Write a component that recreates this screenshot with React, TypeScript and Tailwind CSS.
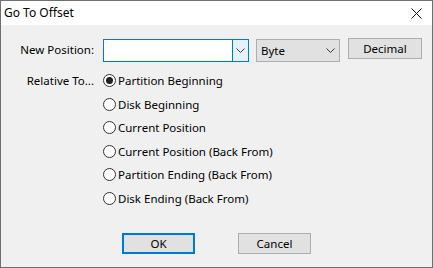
import React from "react";

const font = { fontFamily: '"Noto Sans", "Open Sans", sans-serif' };

const Chevron = () => (
  <svg width="9" height="5" viewBox="0 0 9 5" className="block">
    <path d="M0.5 0.5 L4.5 4.5 L8.5 0.5" fill="none" stroke="#3c3c3c" strokeWidth="1" />
  </svg>
);

const Radio = ({ checked, label }: { checked?: boolean; label: string }) => (
  <div className="flex items-center h-[23.5px]">
    <span className="w-[13px] h-[13px] rounded-full border border-[#333] bg-white flex items-center justify-center">
      {checked && <span className="w-[7px] h-[7px] rounded-full bg-[#222]" />}
    </span>
    <span className="ml-[2px] text-[11.5px] text-black leading-none">{label}</span>
  </div>
);

const options = [
  "Partition Beginning",
  "Disk Beginning",
  "Current Position",
  "Current Position (Back From)",
  "Partition Ending (Back From)",
  "Disk Ending (Back From)",
];

export default function App() {
  return (
    <div
      style={font}
      className="w-[433px] h-[268px] border border-[#6f6f6f] bg-[#f0f0f0] flex flex-col text-black"
    >
      <div className="h-[24px] bg-white flex items-center justify-between pl-[3px] pr-[10px]">
        <span className="text-[12px] leading-none">Go To Offset</span>
        <svg width="11" height="11" viewBox="0 0 11 11">
          <path d="M0.5 0.5 L10.5 10.5 M10.5 0.5 L0.5 10.5" stroke="#111" strokeWidth="1" />
        </svg>
      </div>

      <div className="flex items-start mt-[13px]">
        <div className="w-[94px] text-right text-[11.5px] leading-none mt-[6px] pr-[1px]">New Position:</div>
        <div className="ml-[8px] mt-[1px] w-[146px] h-[23px] border border-[#0078d7] bg-white flex">
          <div className="flex-1" />
          <div className="w-[16px] border-l border-[#0078d7] bg-[#e5f1fb] flex items-center justify-center">
            <Chevron />
          </div>
        </div>
        <div className="ml-[7px] mt-[1px] w-[84px] h-[23px] border border-[#adadad] bg-[#e1e1e1] flex items-center justify-between pl-[4px] pr-[4px]">
          <span className="text-[11.5px] leading-none">Byte</span>
          <Chevron />
        </div>
        <button className="ml-[8px] w-[74px] h-[21px] border border-[#adadad] bg-[#e1e1e1] text-[11.5px] leading-none flex items-center justify-center">
          Decimal
        </button>
      </div>

      <div className="flex items-start mt-[7px]">
        <div className="w-[94px] text-right text-[11.5px] leading-none mt-[6px] pr-[1px]">Relative To...</div>
        <div className="ml-[8px] flex flex-col">
          {options.map((o, i) => (
            <Radio key={o} label={o} checked={i === 0} />
          ))}
        </div>
      </div>

      <div className="flex mt-[23px] pl-[121px]">
        <button className="w-[73px] h-[21px] border-2 border-[#0078d7] bg-[#e1e1e1] text-[11.5px] leading-none flex items-center justify-center">
          OK
        </button>
        <button className="ml-[43px] w-[73px] h-[21px] border border-[#adadad] bg-[#e1e1e1] text-[11.5px] leading-none flex items-center justify-center">
          Cancel
        </button>
      </div>
    </div>
  );
}
